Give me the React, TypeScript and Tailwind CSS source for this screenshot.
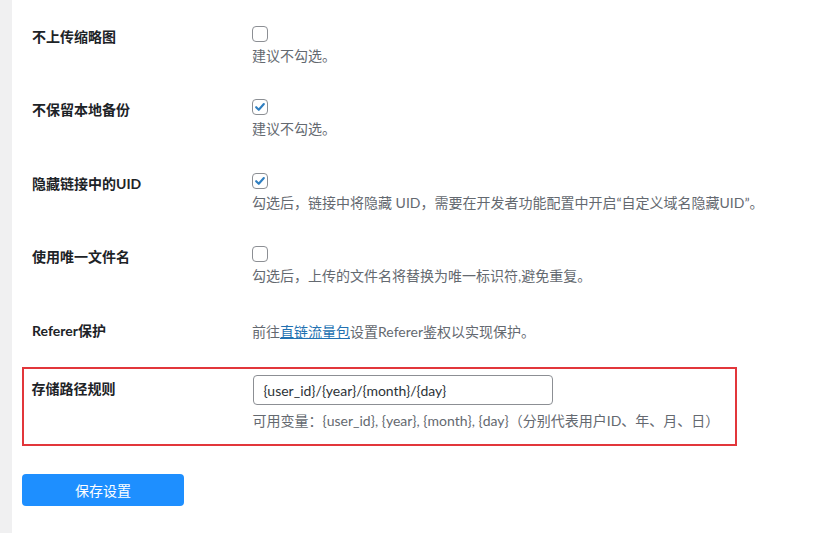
import React from "react";

const font = {
  fontFamily: 'Lato, "Noto Sans CJK SC", sans-serif',
};

function Box({ checked }: { checked?: boolean }) {
  return (
    <span className="flex h-4 w-4 items-center justify-center rounded-[4px] border border-[#8c8f94] bg-white">
      {checked && (
        <svg viewBox="0 0 16 16" className="h-[14px] w-[14px]">
          <path
            d="M3.6 8.2 L6.6 11.2 L12.4 4.6"
            fill="none"
            stroke="#2f7fc1"
            strokeWidth="2.4"
            strokeLinecap="round"
            strokeLinejoin="round"
          />
        </svg>
      )}
    </span>
  );
}

function CheckRow({
  label,
  checked,
  desc,
  h,
}: {
  label: string;
  checked?: boolean;
  desc: string;
  h: string;
}) {
  return (
    <div className={`flex ${h}`}>
      <div className="w-[220px] pt-[27px] text-[14px] leading-[20px] font-bold text-[#1d2327]">
        {label}
      </div>
      <div className="pt-[26px]">
        <Box checked={checked} />
        <p className="mt-[4px] text-[14px] leading-[20px] text-[#646970]">{desc}</p>
      </div>
    </div>
  );
}

export default function App() {
  return (
    <div className="flex h-[533px] w-[821px] overflow-hidden bg-white" style={font}>
      <div className="w-[12px] shrink-0 bg-[#f0f0f1]" />
      <div className="flex-1">
        <div className="pl-[20px]">
          <CheckRow label="不上传缩略图" desc="建议不勾选。" h="h-[73px]" />
          <CheckRow label="不保留本地备份" checked desc="建议不勾选。" h="h-[74px]" />
          <CheckRow
            label="隐藏链接中的UID"
            checked
            desc="勾选后，链接中将隐藏 UID，需要在开发者功能配置中开启“自定义域名隐藏UID”。"
            h="h-[73px]"
          />
          <CheckRow
            label="使用唯一文件名"
            desc="勾选后，上传的文件名将替换为唯一标识符,避免重复。"
            h="h-[74px]"
          />
          <div className="flex h-[73px]">
            <div className="w-[220px] pt-[27px] text-[14px] leading-[20px] font-bold text-[#1d2327]">
              Referer保护
            </div>
            <p className="pt-[28px] text-[14px] leading-[20px] text-[#646970]">
              前往
              <a className="text-[#2271b1] underline">直链流量包</a>
              设置Referer鉴权以实现保护。
            </p>
          </div>
        </div>

        <div className="ml-[10px] flex h-[79px] w-[715px] border-[2.5px] border-[#e2363b] pl-[7.5px]">
          <div className="w-[221px] pt-[10px] text-[14px] leading-[20px] font-bold text-[#1d2327]">
            存储路径规则
          </div>
          <div className="pt-[6px]">
            <div className="flex h-[30px] w-[300px] items-center rounded-[4px] border border-[#8c8f94] px-[10px] text-[14px] text-[#2c3338]">
              {"{user_id}/{year}/{month}/{day}"}
            </div>
            <p className="mt-[6px] text-[14px] leading-[20px] text-[#646970]">
              {"可用变量：{user_id}, {year}, {month}, {day}（分别代表用户ID、年、月、日）"}
            </p>
          </div>
        </div>

        <div className="ml-[10px] mt-[28px]">
          <button className="flex h-[32px] w-[162px] items-center justify-center rounded-[4px] bg-[#1e8fff] text-[14px] text-white">
            保存设置
          </button>
        </div>
      </div>
    </div>
  );
}
